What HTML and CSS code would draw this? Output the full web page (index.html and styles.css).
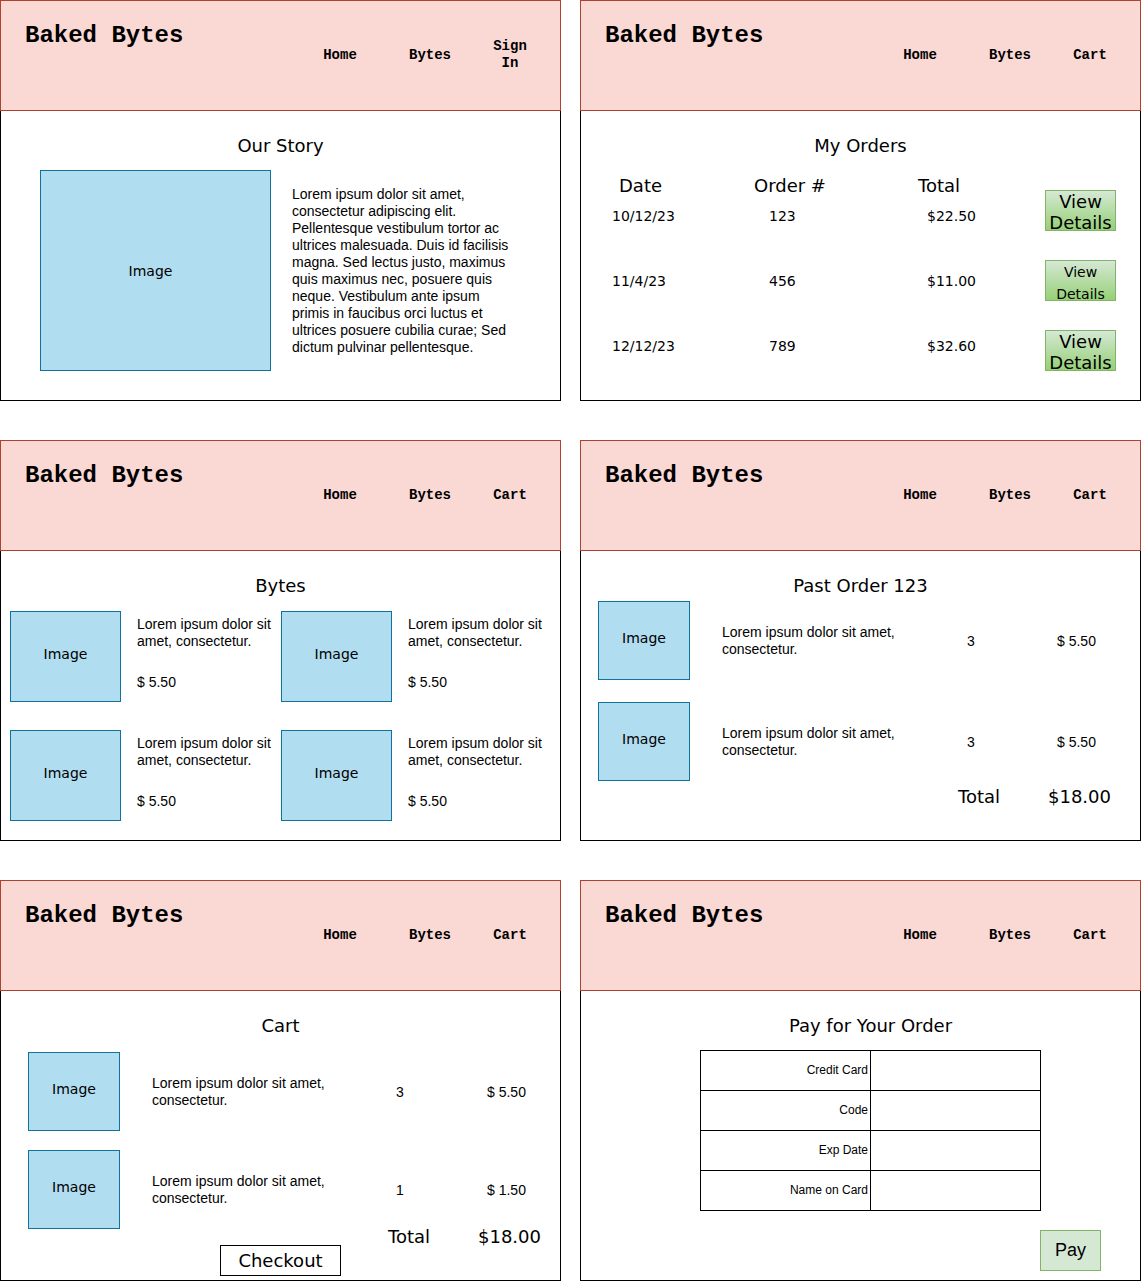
FILE: index.html
```html
<!DOCTYPE html>
<html>
<head>
  <title>Baked Bytes - Wireframes</title>
  <link rel="stylesheet" href="styles.css">
</head>
<body>

<div class="board">

  <!-- our story -->
  <section class="screen">
    <header class="topbar">
      <h1 class="brand">Baked Bytes</h1>
      <nav class="nav">
        <a href="#">Home</a>
        <a href="#">Bytes</a>
        <a href="#">Sign<br>In</a>
      </nav>
    </header>
    <div class="screen-body">
      <h2 class="screen-title">Our Story</h2>
      <div class="story-row">
        <div class="img-ph story-img">Image</div>
        <p class="story-text">Lorem ipsum dolor sit amet,<br>consectetur adipiscing elit.<br>Pellentesque vestibulum tortor ac<br>ultrices malesuada. Duis id facilisis<br>magna. Sed lectus justo, maximus<br>quis maximus nec, posuere quis<br>neque. Vestibulum ante ipsum<br>primis in faucibus orci luctus et<br>ultrices posuere cubilia curae; Sed<br>dictum pulvinar pellentesque.</p>
      </div>
    </div>
  </section>

  <!-- my orders -->
  <section class="screen">
    <header class="topbar">
      <h1 class="brand">Baked Bytes</h1>
      <nav class="nav">
        <a href="#">Home</a>
        <a href="#">Bytes</a>
        <a href="#">Cart</a>
      </nav>
    </header>
    <div class="screen-body">
      <h2 class="screen-title">My Orders</h2>
      <div class="orders">
        <div class="order-table">
          <div class="order-head">
            <span class="c-date">Date</span>
            <span class="c-num">Order #</span>
            <span class="c-total">Total</span>
          </div>
          <div class="order-row first">
            <span class="c-date">10/12/23</span>
            <span class="c-num">123</span>
            <span class="c-total">$22.50</span>
          </div>
          <div class="order-row">
            <span class="c-date">11/4/23</span>
            <span class="c-num">456</span>
            <span class="c-total">$11.00</span>
          </div>
          <div class="order-row">
            <span class="c-date">12/12/23</span>
            <span class="c-num">789</span>
            <span class="c-total">$32.60</span>
          </div>
        </div>
        <div class="detail-btns">
          <button type="button" class="detail-btn">View Details</button>
          <button type="button" class="detail-btn small">View Details</button>
          <button type="button" class="detail-btn">View Details</button>
        </div>
      </div>
    </div>
  </section>

  <!-- bytes -->
  <section class="screen">
    <header class="topbar">
      <h1 class="brand">Baked Bytes</h1>
      <nav class="nav">
        <a href="#">Home</a>
        <a href="#">Bytes</a>
        <a href="#">Cart</a>
      </nav>
    </header>
    <div class="screen-body">
      <h2 class="screen-title">Bytes</h2>
      <div class="bytes-grid">
        <div class="byte-card">
          <div class="img-ph byte-img">Image</div>
          <div class="byte-info">
            <p>Lorem ipsum dolor sit amet, consectetur.</p>
            <p class="price">$ 5.50</p>
          </div>
        </div>
        <div class="byte-card">
          <div class="img-ph byte-img">Image</div>
          <div class="byte-info">
            <p>Lorem ipsum dolor sit amet, consectetur.</p>
            <p class="price">$ 5.50</p>
          </div>
        </div>
        <div class="byte-card">
          <div class="img-ph byte-img">Image</div>
          <div class="byte-info">
            <p>Lorem ipsum dolor sit amet, consectetur.</p>
            <p class="price">$ 5.50</p>
          </div>
        </div>
        <div class="byte-card">
          <div class="img-ph byte-img">Image</div>
          <div class="byte-info">
            <p>Lorem ipsum dolor sit amet, consectetur.</p>
            <p class="price">$ 5.50</p>
          </div>
        </div>
      </div>
    </div>
  </section>

  <!-- past order -->
  <section class="screen">
    <header class="topbar">
      <h1 class="brand">Baked Bytes</h1>
      <nav class="nav">
        <a href="#">Home</a>
        <a href="#">Bytes</a>
        <a href="#">Cart</a>
      </nav>
    </header>
    <div class="screen-body">
      <h2 class="screen-title">Past Order 123</h2>
      <div class="line-items past">
        <div class="line-item">
          <div class="img-ph line-img">Image</div>
          <p class="line-desc">Lorem ipsum dolor sit amet,<br>consectetur.</p>
          <span class="line-qty">3</span>
          <span class="line-price">$ 5.50</span>
        </div>
        <div class="line-item">
          <div class="img-ph line-img">Image</div>
          <p class="line-desc">Lorem ipsum dolor sit amet,<br>consectetur.</p>
          <span class="line-qty">3</span>
          <span class="line-price">$ 5.50</span>
        </div>
      </div>
      <div class="total-row past">
        <span class="total-label">Total</span>
        <span>$18.00</span>
      </div>
    </div>
  </section>

  <!-- cart -->
  <section class="screen">
    <header class="topbar">
      <h1 class="brand">Baked Bytes</h1>
      <nav class="nav">
        <a href="#">Home</a>
        <a href="#">Bytes</a>
        <a href="#">Cart</a>
      </nav>
    </header>
    <div class="screen-body">
      <h2 class="screen-title">Cart</h2>
      <div class="line-items cart">
        <div class="line-item">
          <div class="img-ph line-img">Image</div>
          <p class="line-desc">Lorem ipsum dolor sit amet,<br>consectetur.</p>
          <span class="line-qty">3</span>
          <span class="line-price">$ 5.50</span>
        </div>
        <div class="line-item">
          <div class="img-ph line-img">Image</div>
          <p class="line-desc">Lorem ipsum dolor sit amet,<br>consectetur.</p>
          <span class="line-qty">1</span>
          <span class="line-price">$ 1.50</span>
        </div>
      </div>
      <div class="total-row cart">
        <span class="total-label">Total</span>
        <span>$18.00</span>
      </div>
      <button type="button" class="checkout">Checkout</button>
    </div>
  </section>

  <!-- payment -->
  <section class="screen">
    <header class="topbar">
      <h1 class="brand">Baked Bytes</h1>
      <nav class="nav">
        <a href="#">Home</a>
        <a href="#">Bytes</a>
        <a href="#">Cart</a>
      </nav>
    </header>
    <div class="screen-body">
      <h2 class="screen-title pay-title">Pay for Your Order</h2>
      <form class="card-form" action="#" method="post">
        <label for="id_card">Credit Card</label>
        <div class="field"><input type="text" id="id_card" name="card"></div>
        <label for="id_code">Code</label>
        <div class="field"><input type="text" id="id_code" name="code"></div>
        <label for="id_exp">Exp Date</label>
        <div class="field"><input type="text" id="id_exp" name="exp"></div>
        <label for="id_name">Name on Card</label>
        <div class="field"><input type="text" id="id_name" name="name"></div>
      </form>
      <button type="button" class="pay-btn">Pay</button>
    </div>
  </section>

</div>

</body>
</html>
```

FILE: styles.css
```css
body {
  margin: 0;
  font-family: "Liberation Sans", Arial, sans-serif;
  font-size: 14px;
  color: #000;
  background-color: #fff;
}

p {
  margin: 0;
}

.board {
  display: grid;
  grid-template-columns: 561px 561px;
  column-gap: 19px;
  row-gap: 39px;
}

.screen {
  height: 401px;
  display: flex;
  flex-direction: column;
}

/* pink top bar */
.topbar {
  height: 111px;
  box-sizing: border-box;
  background-color: #fad9d5;
  border: 1px solid #ae4132;
  display: flex;
  align-items: flex-start;
}

.brand {
  margin: 21px 0 0 24px;
  font: bold 24px/27px "Liberation Mono", "Courier New", monospace;
}

.nav {
  margin: 37px 15px 0 auto;
  height: 34px;
  display: flex;
  align-items: center;
}

.nav a {
  width: 90px;
  font: bold 14px/17px "Liberation Mono", "Courier New", monospace;
  color: #000;
  text-decoration: none;
  text-align: center;
}

.nav a:last-child {
  width: 70px;
}

.screen-body {
  flex: 1;
  box-sizing: border-box;
  border: 1px solid #000;
  border-top: none;
  padding-top: 25px;
}

.screen-title {
  margin: 0;
  font: normal 18px/20px "DejaVu Sans", Verdana, sans-serif;
  text-align: center;
}

.img-ph {
  flex-shrink: 0;
  box-sizing: border-box;
  padding-bottom: 6px;
  background-color: #b1ddf0;
  border: 1px solid #10739e;
  display: flex;
  align-items: center;
  justify-content: center;
  font: 14px "DejaVu Sans", Verdana, sans-serif;
}

/* our story */
.story-row {
  display: flex;
  align-items: center;
  margin-top: 14px;
  padding-left: 39px;
}

.story-img {
  width: 231px;
  height: 201px;
  padding: 0 10px 0 0;
}

.story-text {
  margin-left: 21px;
  line-height: 17px;
}

/* my orders */
.orders {
  display: flex;
  margin-top: 20px;
}

.order-table {
  padding-left: 31px;
  font-family: "DejaVu Sans", Verdana, sans-serif;
}

.order-head, .order-row {
  display: flex;
  line-height: 20px;
}

.order-head {
  font-size: 18px;
}

.order-row {
  margin-top: 45px;
}

.order-row.first {
  margin-top: 10px;
}

.c-date { width: 135px; }
.c-num { width: 160px; }
.c-total { width: 138px; }

.order-head .c-date { padding-left: 7px; width: 128px; }
.order-head .c-num { padding-left: 7px; width: 153px; }
.order-head .c-total { padding-left: 11px; width: 127px; }
.order-row .c-num { padding-left: 22px; width: 138px; }
.order-row .c-total { padding-left: 20px; width: 118px; }

.detail-btns {
  display: flex;
  flex-direction: column;
  gap: 29px;
  margin-top: 14px;
}

.detail-btn {
  width: 71px;
  height: 41px;
  box-sizing: border-box;
  padding: 0;
  border: 1px solid #82b366;
  background: linear-gradient(#d5e8d4, #97d077);
  color: #000;
  font: 18px/21px "DejaVu Sans", Verdana, sans-serif;
  overflow: visible;
}

.detail-btn.small {
  font-size: 14px;
  line-height: 22px;
}

/* bytes */
.bytes-grid {
  display: grid;
  grid-template-columns: 271px 271px;
  row-gap: 28px;
  margin-top: 15px;
  padding-left: 9px;
}

.byte-card {
  display: flex;
  gap: 16px;
}

.byte-img {
  width: 111px;
  height: 91px;
}

.byte-info {
  width: 140px;
  padding-top: 5px;
  line-height: 17px;
}

.byte-info .price {
  margin-top: 24px;
}

/* order lines (past order + cart) */
.line-items {
  display: flex;
  flex-direction: column;
}

.line-items.past {
  margin-top: 5px;
  padding-left: 17px;
  gap: 22px;
}

.line-items.cart {
  margin-top: 16px;
  padding-left: 27px;
  gap: 19px;
}

.line-item {
  display: flex;
  align-items: center;
}

.line-img {
  width: 92px;
  height: 79px;
}

.line-desc {
  margin-left: 32px;
  width: 245px;
  line-height: 17px;
}

.line-qty {
  width: 90px;
}

.cart .line-desc { width: 244px; }
.cart .line-qty { width: 91px; }

.total-row {
  display: flex;
  font: 18px/20px "DejaVu Sans", Verdana, sans-serif;
}

.total-row.past {
  margin-top: 6px;
  padding-left: 377px;
}

.total-row.cart {
  margin-top: -1px;
  padding-left: 387px;
  line-height: 18px;
}

.total-label {
  width: 90px;
}

.checkout {
  display: block;
  margin: -1px auto 0;
  width: 121px;
  height: 31px;
  box-sizing: border-box;
  padding: 0;
  border: 1px solid #000;
  background-color: #fff;
  color: #000;
  font: 18px/29px "DejaVu Sans", Verdana, sans-serif;
}

/* payment */
.pay-title {
  padding-left: 20px;
}

.card-form {
  display: grid;
  grid-template-columns: 170px 170px;
  width: 340px;
  margin: 14px 0 0 119px;
  border-top: 1px solid #000;
  border-left: 1px solid #000;
}

.card-form label, .card-form .field {
  height: 40px;
  box-sizing: border-box;
  border-right: 1px solid #000;
  border-bottom: 1px solid #000;
}

.card-form label {
  display: flex;
  align-items: center;
  justify-content: flex-end;
  padding: 0 2px 2px 0;
  font-size: 12px;
}

.card-form input {
  width: 100%;
  height: 100%;
  box-sizing: border-box;
  border: none;
  background: transparent;
}

.pay-btn {
  display: block;
  margin: 19px 0 0 459px;
  width: 61px;
  height: 41px;
  box-sizing: border-box;
  padding: 0;
  border: 1px solid #82b366;
  background-color: #d5e8d4;
  color: #000;
  font: 18px "Liberation Sans", Arial, sans-serif;
}
```
